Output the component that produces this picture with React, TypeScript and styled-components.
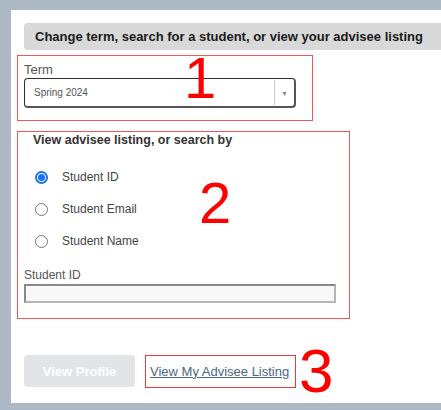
import React, { useState } from "react";
import styled, { createGlobalStyle } from "styled-components";

const GlobalStyle = createGlobalStyle`
  html, body {
    margin: 0;
    padding: 0;
    background: #adb9c6;
    font-family: "Liberation Sans", Arial, sans-serif;
    overflow: hidden;
  }
`;

const Page = styled.div`
  width: 441px;
  height: 410px;
  padding: 10px 0 7px 11px;
  box-sizing: border-box;
  background: #adb9c6;
`;

const Panel = styled.div`
  height: 100%;
  background: #ffffff;
  padding: 13px 0 0 6px;
  box-sizing: border-box;
`;

const HeaderBar = styled.div`
  margin-left: 7px;
  height: 27px;
  background: #d9d9d9;
  border-radius: 4px 0 0 4px;
  display: flex;
  align-items: center;
  padding-left: 11px;
  font-size: 13px;
  font-weight: bold;
  color: #1a1a1a;
  white-space: nowrap;
  overflow: hidden;
`;

const Callout = styled.div<{ $w: number; $h: number; $mt: number }>`
  position: relative;
  width: ${(p) => p.$w}px;
  height: ${(p) => p.$h}px;
  margin-top: ${(p) => p.$mt}px;
  border: 1px solid #f25656;
  box-sizing: border-box;
`;

// red annotation digits drawn over the form
const BigNumber = styled.span<{ $x: number; $y: number }>`
  position: absolute;
  left: ${(p) => p.$x}px;
  top: ${(p) => p.$y}px;
  font-size: 58px;
  line-height: 1;
  color: #ff0000;
  pointer-events: none;
`;

const InlineNumber = styled.span`
  font-size: 62px;
  line-height: 1;
  color: #ff0000;
  margin-left: -7px;
`;

const TermBlock = styled.div`
  padding: 6px 0 0 6px;
`;

const FieldLabel = styled.div<{ $size?: number }>`
  font-size: ${(p) => p.$size ?? 13}px;
  color: #555;
  line-height: 15px;
`;

const Select = styled.div`
  margin-top: 1px;
  width: 272px;
  height: 30px;
  box-sizing: border-box;
  border: 1px solid #3a3a3a;
  border-bottom-width: 2px;
  border-right-width: 2px;
  border-color: #2e2e2e #555 #555 #2e2e2e;
  border-radius: 4px;
  display: flex;
  align-items: stretch;
`;

const SelectValue = styled.div`
  flex: 1;
  display: flex;
  align-items: center;
  padding-left: 9px;
  font-size: 10px;
  color: #555;
`;

const SelectArrow = styled.div`
  width: 19px;
  border-left: 1px solid #c8c8c8;
  margin: 1px 0;
  display: flex;
  align-items: center;
  justify-content: center;
  padding-top: 1px;
  font-size: 7px;
  color: #888;
`;

const SearchBlock = styled.div`
  padding: 0 0 0 6px;
`;

const SectionTitle = styled.div`
  font-size: 12.5px;
  font-weight: bold;
  color: #333;
  padding: 1px 0 0 9px;
  line-height: 15px;
`;

const RadioList = styled.div`
  display: flex;
  flex-direction: column;
  gap: 6px;
  margin-top: 16px;
  padding-left: 11px;
`;

const RadioRow = styled.label`
  display: flex;
  align-items: center;
  height: 26px;
  gap: 14px;
  font-size: 12px;
  color: #444;
  cursor: pointer;
`;

const RadioDot = styled.span<{ $on: boolean }>`
  width: 13px;
  height: 13px;
  border-radius: 50%;
  box-sizing: border-box;
  border: ${(p) => (p.$on ? "2px solid #1a73e8" : "1px solid #777")};
  display: flex;
  align-items: center;
  justify-content: center;
  &::after {
    content: "";
    width: 7px;
    height: 7px;
    border-radius: 50%;
    background: ${(p) => (p.$on ? "#1a73e8" : "transparent")};
  }
`;

const IdField = styled.div`
  margin-top: 14px;
`;

const TextInput = styled.div`
  margin-top: 1px;
  width: 312px;
  height: 19px;
  box-sizing: border-box;
  border: 2px solid #a0a0a0;
  border-color: #8a8a8a #b4b4b4 #b4b4b4 #8a8a8a;
  background: #f8f8f8;
`;

const Actions = styled.div`
  display: flex;
  align-items: center;
  gap: 10px;
  margin: 21px 0 0 7px;
`;

const ProfileButton = styled.button`
  width: 111px;
  height: 32px;
  border: none;
  border-radius: 4px;
  background: #e2e4e7;
  color: #fff;
  font-family: "Liberation Sans", Arial, sans-serif;
  font-size: 13px;
  font-weight: bold;
`;

const LinkBox = styled.div`
  width: 151px;
  height: 33px;
  box-sizing: border-box;
  border: 1px solid #f03a3a;
  display: flex;
  align-items: center;
  padding-left: 4px;
`;

const AdviseeLink = styled.a`
  font-size: 13px;
  color: #4d6680;
  text-decoration: underline;
  white-space: nowrap;
`;

const options = ["Student ID", "Student Email", "Student Name"];

export default function App() {
  const [choice, setChoice] = useState("Student ID");

  return (
    <Page>
      <GlobalStyle />
      <Panel>
        <HeaderBar>Change term, search for a student, or view your advisee listing</HeaderBar>

        <Callout $w={296} $h={66} $mt={5}>
          <TermBlock>
            <FieldLabel>Term</FieldLabel>
            <Select>
              <SelectValue>Spring 2024</SelectValue>
              <SelectArrow>▼</SelectArrow>
            </Select>
          </TermBlock>
          <BigNumber $x={166} $y={-7}>1</BigNumber>
        </Callout>

        <Callout $w={333} $h={188} $mt={10}>
          <SearchBlock>
            <SectionTitle>View advisee listing, or search by</SectionTitle>
            <RadioList>
              {options.map((o) => (
                <RadioRow key={o} onClick={() => setChoice(o)}>
                  <RadioDot $on={choice === o} />
                  {o}
                </RadioRow>
              ))}
            </RadioList>
            <IdField>
              <FieldLabel $size={12}>Student ID</FieldLabel>
              <TextInput />
            </IdField>
          </SearchBlock>
          <BigNumber $x={181} $y={42}>2</BigNumber>
        </Callout>

        <Actions>
          <ProfileButton>View Profile</ProfileButton>
          <LinkBox>
            <AdviseeLink href="#">View My Advisee Listing</AdviseeLink>
          </LinkBox>
          <InlineNumber>3</InlineNumber>
        </Actions>
      </Panel>
    </Page>
  );
}
